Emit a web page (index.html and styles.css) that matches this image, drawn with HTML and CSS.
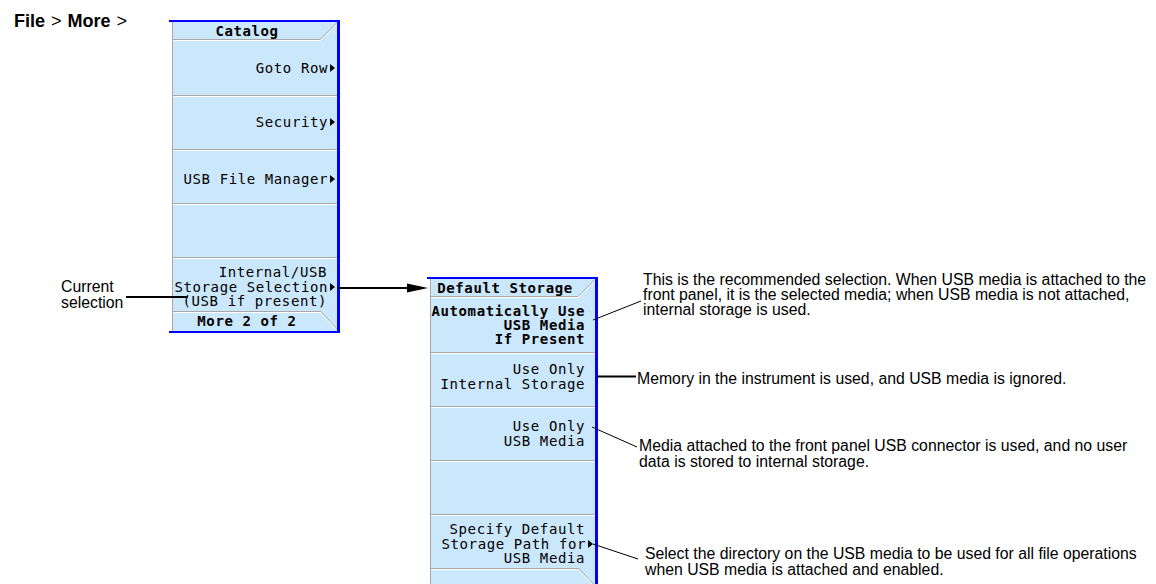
FILE: index.html
```html
<!DOCTYPE html>
<html lang="en">
<head>
  <meta charset="UTF-8">
  <title>File &gt; More &gt; Default Storage</title>
  <meta name="viewport" content="width=device-width, initial-scale=1.0">
  <link rel="stylesheet" href="styles.css">
</head>
<body>
  <div class="figure">
    <p class="crumb"><b>File</b> &gt; <b>More</b> &gt;</p>

    <div class="menu menu-catalog">
      <div class="menu-inner">
        <div class="menu-head">Catalog
          <svg class="tab" width="164" height="19"><polyline points="0,17.5 147,17.5 163.5,1" class="tab-dark"/><polyline points="0,18.5 147.5,18.5 164,2" class="tab-light"/></svg>
        </div>
        <div class="key"><span>Goto Row<i class="more"></i></span></div>
        <div class="key"><span>Security<i class="more"></i></span></div>
        <div class="key key-low"><span>USB File Manager<i class="more"></i></span></div>
        <div class="key"></div>
        <div class="key key-low">
          <span>Internal/USB</span>
          <span>Storage Selection<i class="more"></i></span>
          <span>(USB if present)</span>
        </div>
        <div class="menu-foot">More 2 of 2
          <svg class="tab" width="164" height="20"><polyline points="0,0.5 148,0.5 164,18" class="tab-dark"/><polyline points="0,1.5 147.5,1.5 163,18" class="tab-light"/></svg>
        </div>
      </div>
    </div>

    <p class="label label-current">Current<br>selection</p>

    <div class="menu menu-storage">
      <div class="menu-inner">
        <div class="menu-head">Default Storage
          <svg class="tab" width="164" height="19"><polyline points="0,17.5 147,17.5 163.5,1" class="tab-dark"/><polyline points="0,18.5 147.5,18.5 164,2" class="tab-light"/></svg>
        </div>
        <div class="key key-on">
          <span>Automatically Use</span>
          <span>USB Media</span>
          <span>If Present</span>
        </div>
        <div class="key key-high">
          <span>Use Only</span>
          <span>Internal Storage</span>
        </div>
        <div class="key">
          <span>Use Only</span>
          <span>USB Media</span>
        </div>
        <div class="key"></div>
        <div class="key key-low">
          <span>Specify Default</span>
          <span>Storage Path for<i class="more"></i></span>
          <span>USB Media</span>
        </div>
        <div class="menu-foot">
          <svg class="tab" width="164" height="20"><polyline points="0,0.5 148,0.5 164,18" class="tab-dark"/><polyline points="0,1.5 147.5,1.5 163,18" class="tab-light"/></svg>
        </div>
      </div>
    </div>

    <p class="note note-auto">This is the recommended selection. When USB media is attached to the<br>front panel, it is the selected media; when USB media is not attached,<br>internal storage is used.</p>
    <p class="note note-internal">Memory in the instrument is used, and USB media is ignored.</p>
    <p class="note note-usb">Media attached to the front panel USB connector is used, and no user<br>data is stored to internal storage.</p>
    <p class="note note-path">Select the directory on the USB media to be used for all file operations<br>when USB media is attached and enabled.</p>

    <!-- leader lines between the softkeys and the notes -->
    <svg class="leaders" width="1156" height="584">
      <line x1="126" y1="297" x2="188" y2="297" class="thick"/>
      <line x1="338" y1="288" x2="412" y2="288" class="thick"/>
      <polygon points="407,283.5 428,288 407,292.5"/>
      <line x1="593" y1="320" x2="641" y2="301"/>
      <line x1="597" y1="376.5" x2="636" y2="376.5" class="thick"/>
      <line x1="592" y1="427" x2="637" y2="447"/>
      <line x1="593" y1="544" x2="638" y2="559"/>
    </svg>
  </div>
</body>
</html>
```

FILE: styles.css
```css
body {
  margin: 0;
  background: #fff;
  overflow: hidden;
  font-family: "Liberation Sans", Arial, sans-serif;
  color: #000;
}
.figure {
  position: relative;
  width: 1156px;
  height: 584px;
  overflow: hidden;
}
.crumb {
  position: absolute;
  left: 14px;
  top: 11px;
  margin: 0;
  font-size: 18px;
  line-height: 20px;
  word-spacing: 1px;
}

/* softkey menus */
.menu {
  position: absolute;
  width: 171px;
  box-sizing: border-box;
  padding-left: 3px;
  background: #fff;
  border-top: 2px solid #0000ff;
  border-right: 3px solid #0000ff;
  border-bottom: 2px solid #0000ff;
  font-family: "DejaVu Sans Mono", monospace;
  font-size: 14px;
  letter-spacing: 0.6px;
  line-height: 14.5px;
}
.menu-catalog {
  left: 169px;
  top: 20px;
}
.menu-storage {
  left: 427px;
  top: 277px;
}
.menu-inner {
  border-left: 1px solid #a8a8a8;
  background: #cbe7fb;
}
.menu-head,
.menu-foot {
  position: relative;
  text-align: center;
  padding-right: 16px;
  font-weight: bold;
}
.menu-head {
  height: 19px;
  line-height: 18px;
}
.menu-foot {
  height: 20px;
  line-height: 21px;
}
.tab {
  position: absolute;
  left: 0;
  top: 0;
}
.tab polyline {
  fill: none;
  stroke-width: 1;
}
.tab-dark {
  stroke: #a8a8a8;
}
.tab-light {
  stroke: #fff;
}
.key {
  height: 54px;
  box-sizing: border-box;
  display: flex;
  flex-direction: column;
  justify-content: center;
  text-align: right;
  padding-right: 10px;
  white-space: nowrap;
}
.key + .key {
  border-top: 1px solid #a8a8a8;
  box-shadow: inset 0 1px 0 #fff;
}
.key-low {
  padding-top: 5px;
}
.key-high {
  padding-bottom: 6px;
}
.key-on {
  font-weight: bold;
  line-height: 14px;
}
.more {
  display: inline-block;
  width: 0;
  height: 0;
  border-left: 5px solid #000;
  border-top: 4px solid transparent;
  border-bottom: 4px solid transparent;
  margin: 0 -8px 0 2px;
  vertical-align: 1px;
}

/* callout texts */
.label,
.note {
  position: absolute;
  margin: 0;
  font-size: 15.8px;
  line-height: 16px;
  white-space: nowrap;
}
.label-current {
  left: 61px;
  top: 279px;
}
.note-auto {
  left: 643px;
  top: 272px;
  line-height: 15px;
}
.note-internal {
  left: 637px;
  top: 371px;
}
.note-usb {
  left: 639px;
  top: 438px;
}
.note-path {
  left: 645px;
  top: 546px;
}
.leaders {
  position: absolute;
  left: 0;
  top: 0;
  pointer-events: none;
}
.leaders line {
  stroke: #000;
  stroke-width: 1;
}
.leaders line.thick {
  stroke-width: 2;
}
```
